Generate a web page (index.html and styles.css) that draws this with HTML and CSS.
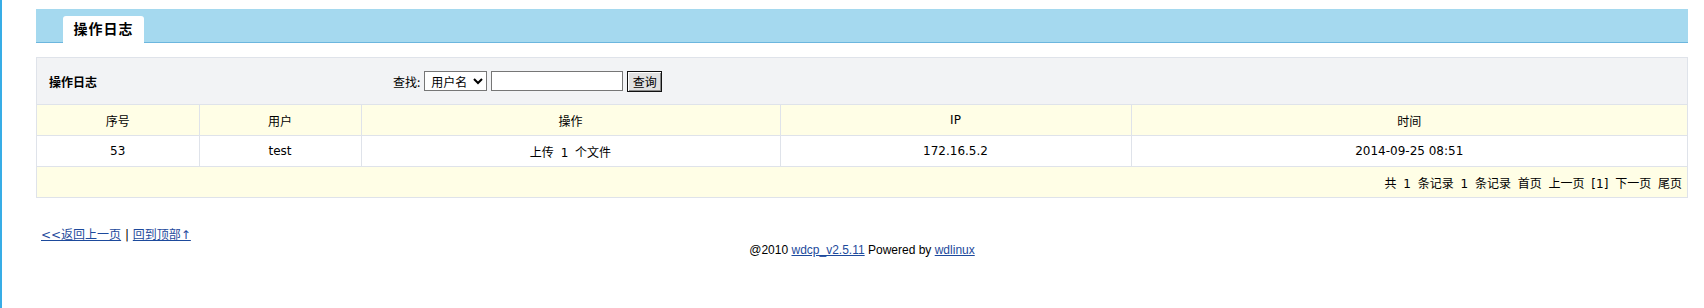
FILE: index.html
```html
<!DOCTYPE html>
<html lang="zh-CN">
<head>
    <meta charset="UTF-8">
    <title>操作日志</title>
    <link rel="stylesheet" href="styles.css">
</head>
<body>
    <div class="top-bar">
        <div class="tab">操作日志</div>
    </div>

    <div class="panel">
        <div class="panel-head">
            <div class="panel-title">操作日志</div>
            <form class="search" onsubmit="return false">
                <label>查找:</label>
                <select class="search-field">
                    <option>用户名</option>
                    <option>操作</option>
                    <option>IP</option>
                </select>
                <input type="text" class="search-input">
                <button class="search-btn">查询</button>
            </form>
        </div>

        <table class="log-table">
            <colgroup>
                <col style="width: 162px">
                <col style="width: 162px">
                <col style="width: 419px">
                <col style="width: 351px">
                <col>
            </colgroup>
            <thead>
                <tr>
                    <th>序号</th>
                    <th>用户</th>
                    <th>操作</th>
                    <th>IP</th>
                    <th>时间</th>
                </tr>
            </thead>
            <tbody>
                <tr>
                    <td>53</td>
                    <td>test</td>
                    <td class="spaced">上传 1 个文件</td>
                    <td>172.16.5.2</td>
                    <td>2014-09-25 08:51</td>
                </tr>
            </tbody>
            <tfoot>
                <tr>
                    <td colspan="5" class="pager spaced">共 1 条记录 1 条记录 首页 上一页 [1] 下一页 尾页</td>
                </tr>
            </tfoot>
        </table>
    </div>

    <div class="back-links">
        <a href="#">&lt;&lt;返回上一页</a> | <a href="#">回到顶部↑</a>
    </div>
    <div class="copyright">
        @2010 <a href="#">wdcp_v2.5.11</a> Powered by <a href="#">wdlinux</a>
    </div>
</body>
</html>
```

FILE: styles.css
```css
body {
    margin: 0;
    padding: 9px 16px 0 34px;
    border-left: 2px solid #38ade6;
    min-height: 100vh;
    box-sizing: border-box;
    font-family: "DejaVu Sans", "Noto Sans CJK SC", sans-serif;
    font-size: 12px;
    color: #000;
    background: #fff;
}
a {
    color: #1d4a9c;
}
.top-bar {
    height: 27px;
    padding: 6px 0 0 27px;
    background: #a5d9ef;
    border-bottom: 1px solid #6cb6de;
    display: flex;
    align-items: flex-end;
}
.tab {
    width: 81px;
    height: 27px;
    margin-bottom: -1px;
    box-sizing: border-box;
    background: #fff;
    border-radius: 3px 3px 0 0;
    font-size: 14px;
    font-weight: bold;
    letter-spacing: 1px;
    line-height: 27px;
    text-align: center;
}
.panel {
    margin-top: 14px;
    border: 1px solid #dfe3ea;
}
.panel-head {
    height: 46px;
    background: #f2f3f5;
    display: flex;
    align-items: center;
}
.panel-title {
    width: 344px;
    padding-left: 12px;
    font-weight: bold;
}
.search {
    display: flex;
    align-items: center;
    margin: 0;
}
.search label {
    margin-right: 4px;
    font-family: "Noto Sans CJK SC", sans-serif;
}
.search-field {
    width: 63px;
    height: 20px;
    padding: 0 0 0 2px;
    border: 1px solid #767676;
    border-radius: 0;
    background: #fff;
    font-family: "Noto Sans CJK SC", sans-serif;
    font-size: 12px;
}
.search-input {
    width: 132px;
    height: 20px;
    box-sizing: border-box;
    margin-left: 4px;
    border: 1px solid #767676;
    padding: 1px 2px;
}
.search-btn {
    width: 35px;
    height: 21px;
    margin-left: 4px;
    padding: 0;
    border: 1px solid #111;
    box-shadow: inset 1px 1px #fff, inset -1px -1px #888;
    background: #e1e1e1;
    font-family: "Noto Sans CJK SC", sans-serif;
    font-size: 12px;
}
.log-table {
    width: 100%;
    table-layout: fixed;
    border-collapse: collapse;
}
.log-table th,
.log-table td {
    height: 30px;
    padding: 0;
    border: 1px solid #dfe3ea;
    text-align: center;
    font-weight: normal;
}
.log-table tr > :first-child {
    border-left: none;
}
.log-table tr > :last-child {
    border-right: none;
}
.log-table thead th {
    background: #fffee6;
}
.log-table tfoot td {
    border-bottom: none;
    background: #fffee6;
}
.log-table .spaced {
    word-spacing: 3px;
}
.log-table .pager {
    text-align: right;
    padding-right: 5px;
}
.back-links {
    margin-top: 30px;
    padding-left: 5px;
    line-height: 15px;
}
.copyright {
    text-align: center;
    line-height: 15px;
    font-family: "Liberation Sans", "Noto Sans CJK SC", sans-serif;
}
```
